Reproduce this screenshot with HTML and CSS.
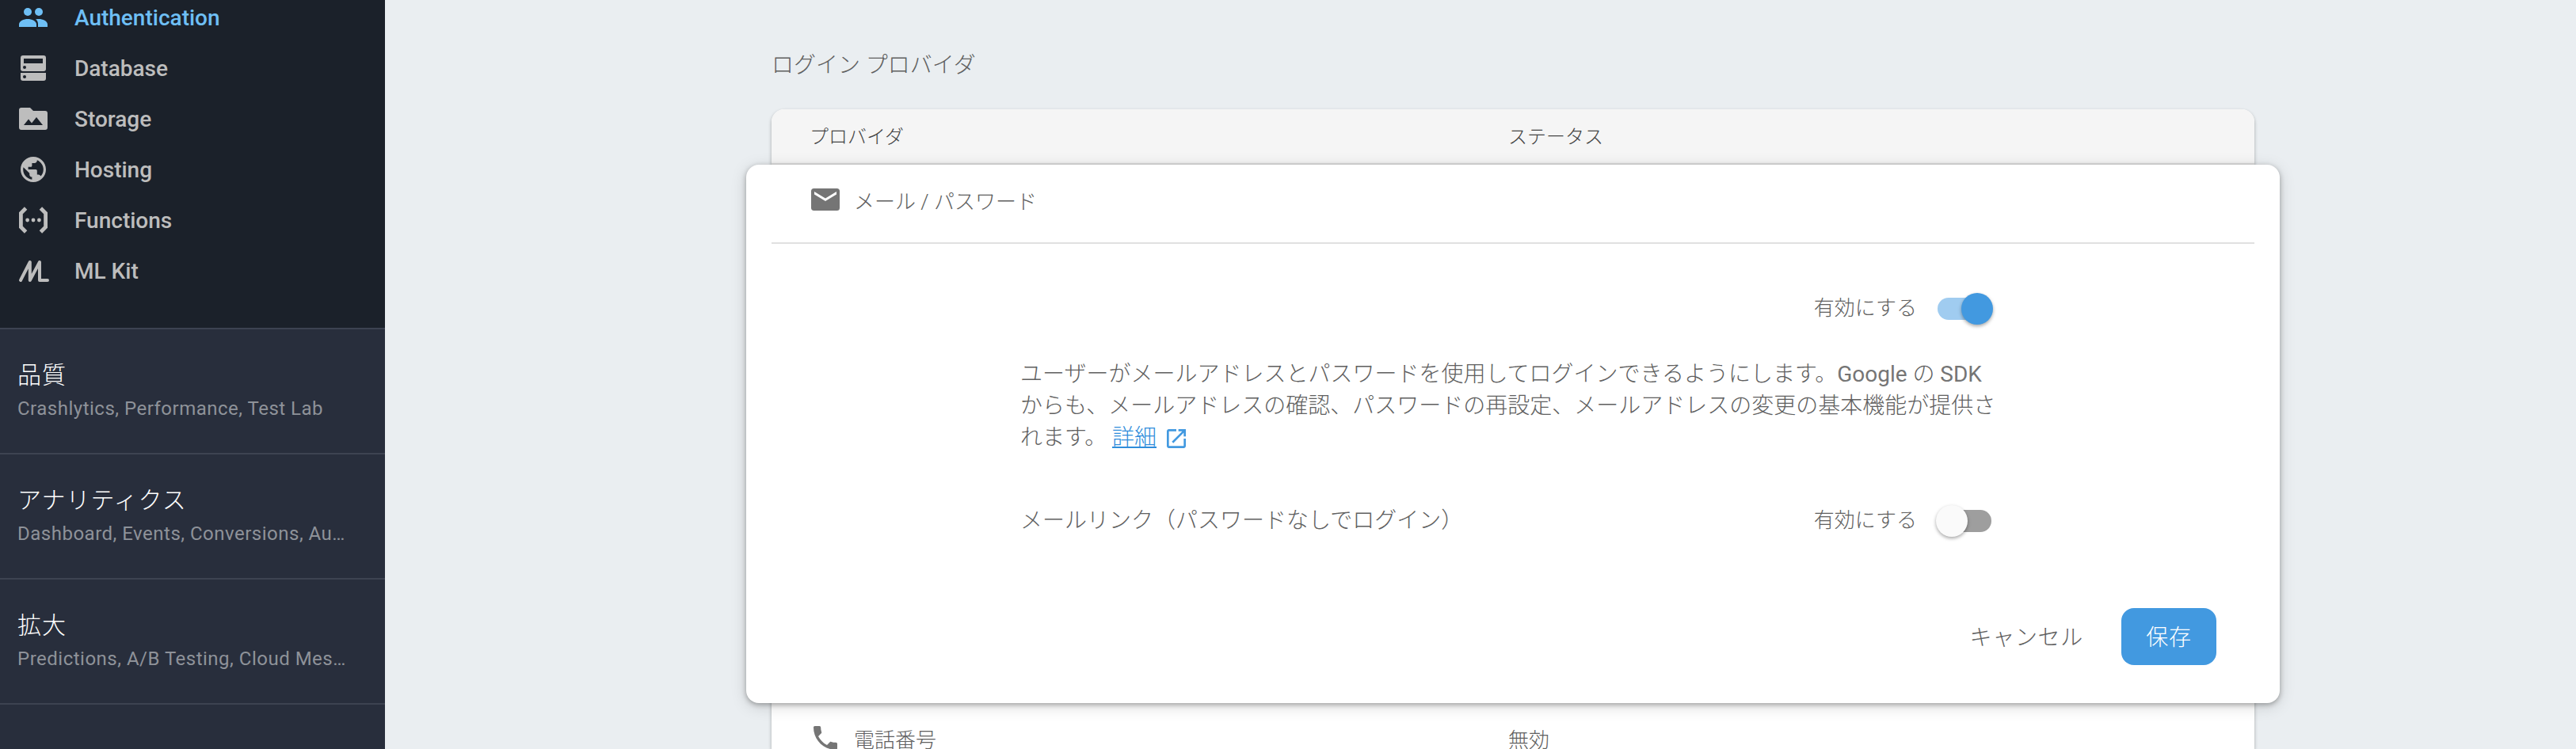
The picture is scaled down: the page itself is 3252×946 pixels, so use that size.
FILE: index.html
```html
<!DOCTYPE html>
<html lang="ja">
<head>
    <meta charset="UTF-8">
    <meta name="viewport" content="width=device-width, initial-scale=1.0">
    <title>Authentication</title>
    <link rel="stylesheet" href="styles.css">
</head>
<body>
    <nav class="sidebar">
        <div class="nav-list">
            <a class="nav-item active">
                <svg class="nav-icon" viewBox="0 0 20 20"><circle cx="6.500" cy="6.500" r="2.500"/><circle cx="13.500" cy="6.500" r="2.500"/><path d="M1 16v-1.600C1 12.200 4 11 6.500 11S12 12.200 12 14.400V16z"/><path d="M12 11.100c.5-.1 1-.1 1.500-.1 2.500 0 5.500 1.200 5.500 3.400V16h-6v-1.600c0-1.400-.4-2.500-1.500-3.300z"/></svg>
                <span>Authentication</span>
            </a>
            <a class="nav-item">
                <svg class="nav-icon" viewBox="0 0 20 20"><path fill-rule="evenodd" d="M3.500 2h13A1.500 1.500 0 0 1 18 3.500v7a1.500 1.500 0 0 1-1.500 1.500h-13A1.500 1.500 0 0 1 2 10.500v-7A1.500 1.500 0 0 1 3.500 2zM4 4v3h12V4zM4.500 8.500a1 1 0 1 0 0 2 1 1 0 0 0 0-2zM2 13h16v3.500a1.500 1.500 0 0 1-1.500 1.500h-13A1.500 1.500 0 0 1 2 16.500zm2.500 1.500a1 1 0 1 0 0 2 1 1 0 0 0 0-2z"/></svg>
                <span>Database</span>
            </a>
            <a class="nav-item">
                <svg class="nav-icon" viewBox="0 0 20 20"><path fill-rule="evenodd" d="M3 3h5l2 2h7.500A1.500 1.500 0 0 1 19 6.500v9a1.500 1.500 0 0 1-1.500 1.500h-15A1.500 1.500 0 0 1 1 15.500v-11A1.500 1.500 0 0 1 2.500 3zM4 14h12l-4-5-3 3.700L7 10.200z"/></svg>
                <span>Storage</span>
            </a>
            <a class="nav-item">
                <svg class="nav-icon" viewBox="2 2 20 20"><g transform="translate(2.400 2.400) scale(.8)"><path d="M12 2C6.480 2 2 6.480 2 12s4.480 10 10 10 10-4.480 10-10S17.520 2 12 2zm-1 17.930c-3.950-.49-7-3.850-7-7.930 0-.62.080-1.210.21-1.790L9 15v1c0 1.100.9 2 2 2v1.930zm6.900-2.540c-.26-.81-1-1.390-1.900-1.390h-1v-3c0-.55-.45-1-1-1H8v-2h2c.55 0 1-.45 1-1V7h2c1.100 0 2-.9 2-2v-.41c2.930 1.190 5 4.060 5 7.410 0 2.080-.8 3.970-2.100 5.390z"/></g></svg>
                <span>Hosting</span>
            </a>
            <a class="nav-item">
                <svg class="nav-icon" viewBox="0 0 20 20"><path class="line" d="M5.300 2.500L2.200 5.600v8.800l3.100 3.100M14.700 2.500l3.100 3.100v8.800l-3.100 3.100"/><circle cx="6.300" cy="10" r="1.200"/><circle cx="10" cy="10" r="1.200"/><circle cx="13.700" cy="10" r="1.200"/></svg>
                <span>Functions</span>
            </a>
            <a class="nav-item">
                <svg class="nav-icon" viewBox="0 0 20 20"><path class="line round" d="M2 16L7.900 4.500V16L14 4.500V16h5"/></svg>
                <span>ML Kit</span>
            </a>
        </div>
        <div class="nav-group">
            <div class="group-title">品質</div>
            <div class="group-text">Crashlytics, Performance, Test Lab</div>
        </div>
        <div class="nav-group">
            <div class="group-title">アナリティクス</div>
            <div class="group-text">Dashboard, Events, Conversions, Au…</div>
        </div>
        <div class="nav-group">
            <div class="group-title">拡大</div>
            <div class="group-text">Predictions, A/B Testing, Cloud Mes…</div>
        </div>
        <div class="nav-group last"></div>
    </nav>

    <main class="content">
        <h2 class="page-title">ログイン プロバイダ</h2>
        <div class="providers">
            <div class="table-head">
                <div class="col-name">プロバイダ</div>
                <div>ステータス</div>
            </div>

            <div class="editor">
                <div class="editor-head">
                    <svg class="mail-icon" viewBox="0 0 36 28"><path fill-rule="evenodd" d="M3.500 0h29A3.500 3.500 0 0 1 36 3.500v21a3.500 3.500 0 0 1-3.500 3.500h-29A3.500 3.500 0 0 1 0 24.500v-21A3.500 3.500 0 0 1 3.500 0zM4 4v3.500l14 8.500 14-8.500V4l-14 8.500z"/></svg>
                    <span>メール / パスワード</span>
                </div>
                <div class="editor-body">
                    <div class="setting-row">
                        <span class="toggle-label">有効にする</span>
                        <span class="toggle on"></span>
                    </div>
                    <p class="description">ユーザーがメールアドレスとパスワードを使用してログインできるようにします。<span class="latin">Google</span> の <span class="latin">SDK</span><br>からも、メールアドレスの確認、パスワードの再設定、メールアドレスの変更の基本機能が提供さ<br>れます。 <a class="link">詳細</a><svg class="open-icon" viewBox="0 0 24 24"><path d="M19 19H5V5h7V3H5c-1.110 0-2 .9-2 2v14c0 1.100.890 2 2 2h14c1.100 0 2-.9 2-2v-7h-2v7zM14 3v2h3.590l-9.830 9.830 1.410 1.410L19 6.410V10h2V3h-7z"/></svg></p>
                    <div class="setting-row">
                        <span class="setting-name">メールリンク（パスワードなしでログイン）</span>
                        <span class="toggle-label">有効にする</span>
                        <span class="toggle"></span>
                    </div>
                </div>
                <div class="actions">
                    <button class="button">キャンセル</button>
                    <button class="button primary">保存</button>
                </div>
            </div>

            <div class="table-row">
                <div class="col-name">
                    <svg class="phone-icon" viewBox="0 0 24 24"><path d="M6.620 10.790c1.440 2.830 3.760 5.140 6.590 6.590l2.200-2.200c.27-.27.67-.36 1.020-.24 1.120.37 2.330.57 3.570.57.55 0 1 .45 1 1V20c0 .55-.45 1-1 1-9.390 0-17-7.610-17-17 0-.55.45-1 1-1h3.500c.55 0 1 .45 1 1 0 1.250.2 2.450.57 3.570.11.35.03.74-.25 1.020l-2.200 2.200z"/></svg>
                    <span>電話番号</span>
                </div>
                <div>無効</div>
            </div>
        </div>
    </main>
</body>
</html>
```
FILE: styles.css
```css
* {
    box-sizing: border-box;
}

body {
    margin: 0;
    height: 946px;
    display: flex;
    overflow: hidden;
    background: #eaeef1;
    color: #606060;
    font-family: Roboto, "Noto Sans CJK JP", sans-serif;
    font-size: 26px;
    font-weight: 300;
}

/* sidebar */
.sidebar {
    width: 486px;
    flex-shrink: 0;
    background: #282e3c;
}

.nav-list {
    height: 426px;
    margin-top: -12px;
    padding-top: 2px;
    background: #1b212a;
}

.nav-item {
    display: flex;
    align-items: center;
    height: 64px;
    padding-left: 22px;
    color: #bdbdbd;
    font-size: 28px;
    font-weight: 500;
}

.nav-item.active {
    color: #6ebff5;
}

.nav-icon {
    width: 40px;
    height: 40px;
    margin-right: 32px;
    fill: currentColor;
}

.line {
    fill: none;
    stroke: currentColor;
    stroke-width: 2.4;
}

.line.round {
    stroke-width: 2;
    stroke-linecap: round;
    stroke-linejoin: round;
}

.nav-group {
    height: 158px;
    padding: 36px 22px 0;
    border-top: 2px solid #3d4351;
    white-space: nowrap;
}

.nav-group.last {
    height: 58px;
}

.group-title {
    color: #fff;
    font-size: 30px;
    line-height: 44px;
    letter-spacing: 1px;
}

.group-text {
    margin-top: 2px;
    color: #8e9299;
    font-size: 24px;
    font-weight: 400;
    line-height: 36px;
    letter-spacing: 0.5px;
}

/* content */
.content {
    flex: 1;
    padding-left: 488px;
}

.page-title {
    margin: 0;
    padding-top: 63px;
    height: 138px;
    font-size: 28px;
    font-weight: 300;
    line-height: 40px;
}

.providers {
    width: 1872px;
    height: 808px;
    background: #fff;
    border-radius: 16px 16px 0 0;
    box-shadow: 0 2px 4px rgba(0, 0, 0, 0.3);
}

.table-head,
.table-row {
    display: flex;
    padding-left: 48px;
}

.table-head {
    height: 70px;
    align-items: center;
    padding-bottom: 3px;
    background: #f5f5f5;
    border-radius: 16px 16px 0 0;
    border-bottom: 2px solid #e0e0e0;
    color: #444;
    font-size: 24px;
}

.col-name {
    display: flex;
    align-items: center;
    width: 882px;
}

.editor {
    position: relative;
    height: 680px;
    margin: 0 -32px;
    padding: 0 32px;
    background: #fff;
    border-radius: 16px;
    box-shadow: 0 2px 6px rgba(0, 0, 0, 0.3), 0 4px 20px rgba(0, 0, 0, 0.15);
}

.editor-head {
    display: flex;
    align-items: center;
    height: 100px;
    padding: 0 0 10px 50px;
    border-bottom: 2px solid #e0e0e0;
}

.mail-icon {
    width: 36px;
    height: 28px;
    margin-right: 18px;
    fill: #757575;
}

.editor-body {
    padding: 62px 0 0 314px;
    width: 1540px;
    font-size: 28px;
}

.setting-row {
    display: flex;
    align-items: center;
    justify-content: flex-end;
    height: 40px;
}

.setting-name {
    margin-right: auto;
    padding-bottom: 6px;
}

.toggle-label {
    margin-right: 26px;
    padding-bottom: 7px;
    font-size: 26px;
}

.toggle {
    display: flex;
    align-items: center;
    width: 68px;
    height: 28px;
    border-radius: 14px;
    background: #9e9e9e;
}

.toggle::before {
    content: "";
    width: 40px;
    height: 40px;
    margin-left: -2px;
    flex-shrink: 0;
    border-radius: 50%;
    background: #fafafa;
    box-shadow: 0 2px 4px rgba(0, 0, 0, 0.35);
}

.toggle.on {
    background: #a0ccf0;
}

.toggle.on::before {
    margin-left: 30px;
    background: #4299e0;
}

.description {
    margin: 43px 0 65px;
    line-height: 40px;
    white-space: nowrap;
}

.latin {
    color: #757575;
    font-weight: 400;
}

.link {
    color: #2f8ddb;
    text-decoration: underline;
}

.open-icon {
    width: 32px;
    height: 32px;
    margin-left: 9px;
    vertical-align: -8px;
    fill: #4299e0;
}

.actions {
    display: flex;
    justify-content: flex-end;
    gap: 16px;
    margin-top: 90px;
    padding-right: 48px;
}

.button {
    height: 72px;
    padding: 0 32px 2px;
    border: none;
    border-radius: 16px;
    background: none;
    color: #606060;
    font-family: inherit;
    font-size: 28px;
    font-weight: 300;
    letter-spacing: 0.7px;
}

.button.primary {
    width: 120px;
    padding: 0 0 2px;
    background: #4299e0;
    color: #fff;
}

.table-row {
    align-items: center;
    height: 88px;
}

.phone-icon {
    width: 40px;
    height: 40px;
    margin-right: 16px;
    fill: #757575;
}
```
